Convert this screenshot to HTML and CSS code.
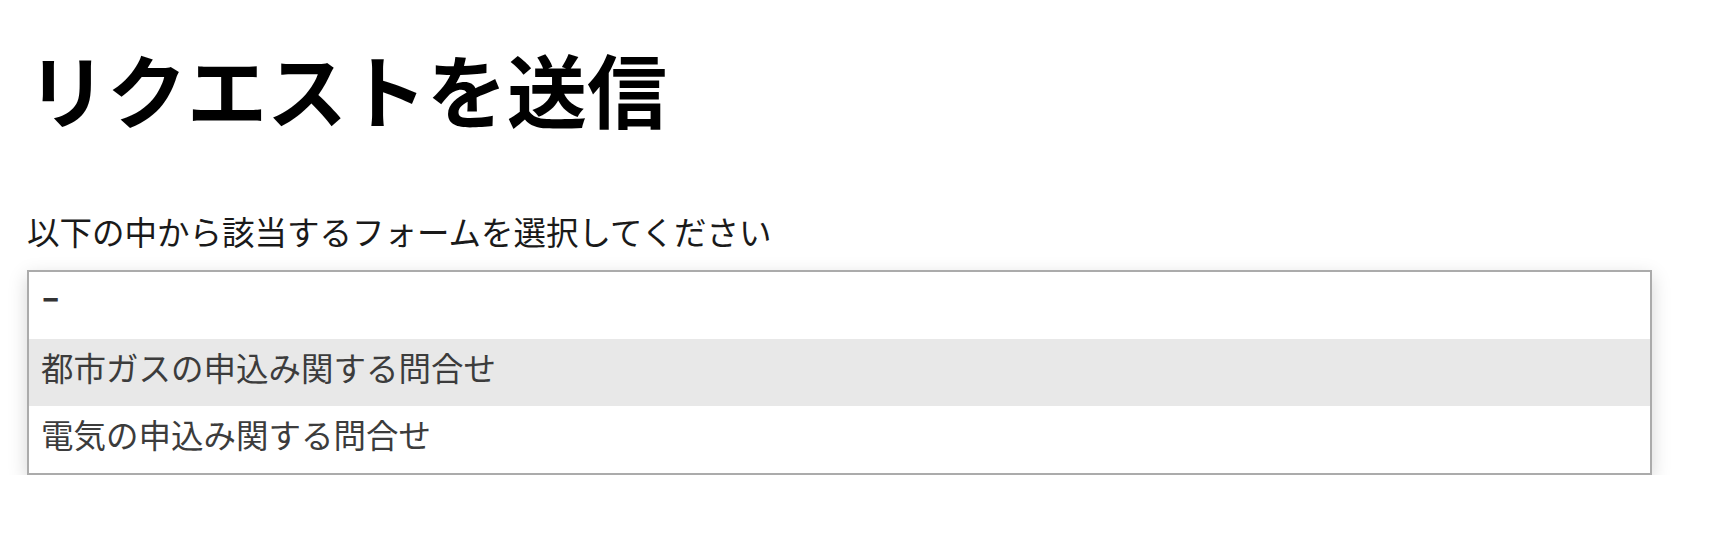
FILE: index.html
```html
<!DOCTYPE html>
<html lang="ja">
<head>
<meta charset="utf-8">
<title>リクエストを送信</title>
<link rel="stylesheet" href="styles.css">
</head>
<body>
<main class="page">
  <h1 class="title">リクエストを送信</h1>
  <p class="lead">以下の中から該当するフォームを選択してください</p>
  <ul class="listbox">
    <li class="option option-empty"><span class="dash">-</span></li>
    <li class="option option-active">都市ガスの申込み関する問合せ</li>
    <li class="option">電気の申込み関する問合せ</li>
  </ul>
</main>
</body>
</html>
```

FILE: styles.css
```css
html, body {
  margin: 0;
  padding: 0;
  background: #ffffff;
}

body {
  font-family: "Noto Sans CJK JP", "Noto Sans", sans-serif;
  color: #111111;
}

.page {
  padding: 47px 0 0 27px;
  width: 1625px;
}

.title {
  margin: 0;
  font-size: 80px;
  line-height: 80px;
  font-weight: 700;
  color: #000000;
}

.lead {
  margin: 88px 0 0 0;
  font-size: 32.5px;
  line-height: 32px;
  color: #1a1a1a;
}

.listbox {
  list-style: none;
  margin: 23px 0 0 0;
  padding: 0;
  border: 2px solid #ababab;
  background: #ffffff;
  box-shadow: 0 6px 18px rgba(0, 0, 0, 0.17);
}

.option {
  box-sizing: border-box;
  height: 67px;
  display: flex;
  align-items: center;
  padding: 0 12px 12px 12px;
  font-size: 32.5px;
  line-height: 32px;
  color: #3c3c3c;
}

.option-empty {
  color: #333333;
  font-weight: 700;
  padding-bottom: 22px;
}

.dash {
  display: inline-block;
  transform: scaleX(1.6);
  transform-origin: left center;
}

.option-active {
  background: #e8e8e8;
}
```
